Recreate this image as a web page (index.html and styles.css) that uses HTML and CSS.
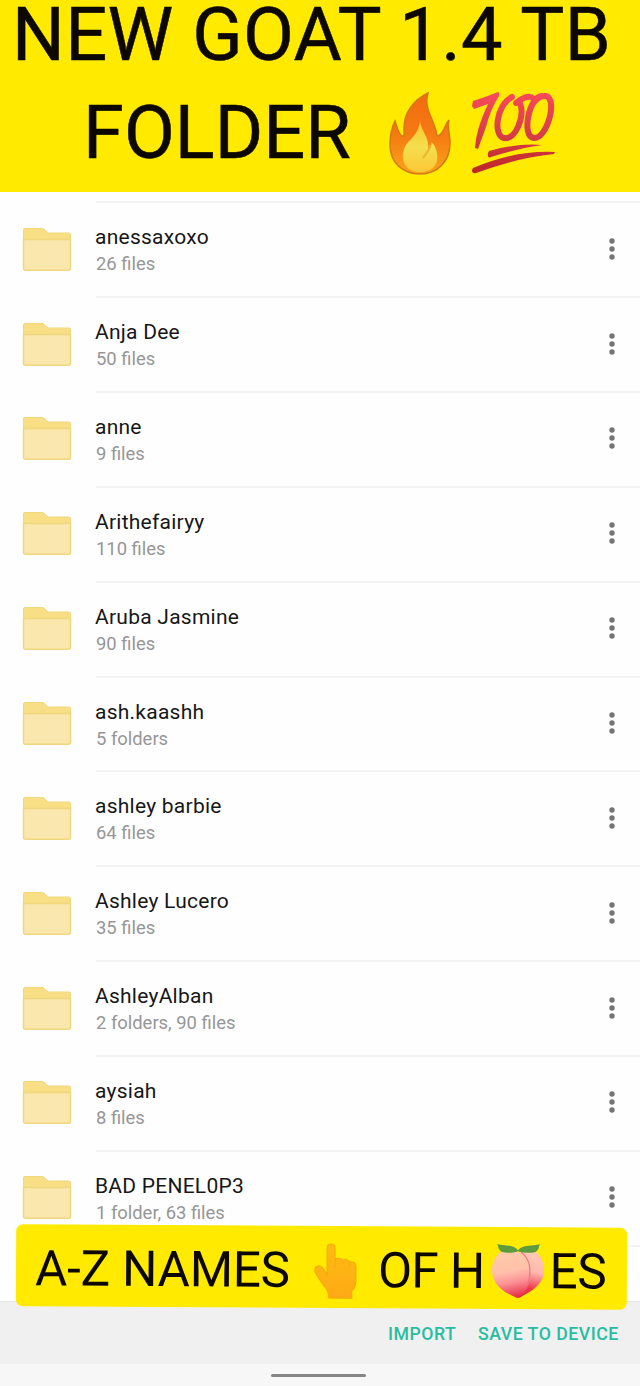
FILE: index.html
```html
<!DOCTYPE html>
<html lang="en">
<head>
<meta charset="utf-8">
<title>Folders</title>
<link rel="stylesheet" href="styles.css">
</head>
<body>
<svg class="defs" width="0" height="0" aria-hidden="true">
  <defs>
    <symbol id="folder" viewBox="0 0 50 45">
      <path d="M1.500 3Q1.500 1.500 3 1.500H20Q22 1.500 23.500 3.500L26 6H47Q48.500 6 48.500 7.500V14H1.500Z" fill="#f8df86" stroke="#f1d87c" stroke-width="1"/>
      <path d="M1.500 12.500H48.500V41Q48.500 43.300 46.500 43.300H3.500Q1.500 43.300 1.500 41Z" fill="#fae7ae" stroke="#f0d67c" stroke-width="1.400"/>
    </symbol>
    <symbol id="more" viewBox="0 0 8 24">
      <circle cx="4" cy="4" r="2.700"/><circle cx="4" cy="12" r="2.700"/><circle cx="4" cy="20" r="2.700"/>
    </symbol>
  </defs>
</svg>
<div class="screen">
  <header class="banner">
    <div class="banner-line first">NEW GOAT 1.4 TB</div>
    <div class="banner-line second">
      <span class="banner-word">FOLDER</span>
      <svg class="fire" viewBox="0 0 62 84">
        <defs>
          <linearGradient id="flame" x1="0" y1="0" x2="0" y2="1"><stop offset="0" stop-color="#f36a10"/><stop offset=".5" stop-color="#f57912"/><stop offset="1" stop-color="#fba41c"/></linearGradient>
          <linearGradient id="core" x1="0" y1="0" x2="0" y2="1"><stop offset="0" stop-color="#f5c62c"/><stop offset=".5" stop-color="#f5de4e"/><stop offset="1" stop-color="#fbc836"/></linearGradient>
        </defs>
        <path d="M39 1C25 8 15 20 15 36C15 41 16 45 13 44C9 41 8 35 6 29C2 37 1 44 1 53C1 71 14 82 31 82C49 82 61 69 61 51C61 42 58 36 60 28C55 34 54 44 48 44C46 27 34 18 39 1Z" fill="url(#flame)" stroke="#d17b12" stroke-width="1.500"/>
        <path d="M31 29C29 45 19 47 15 57C11 70 18 80 31 80C43 80 50 73 48 61C47 55 44 51 42 50C43 55 41 58 39 57C41 46 32 39 31 29Z" fill="url(#core)"/>
        <path d="M41 53C41 59 36 62 34 66" fill="none" stroke="#e7b72d" stroke-width="2"/>
      </svg>
      <svg class="hundred" viewBox="0 0 84 84">
        <defs><linearGradient id="red" gradientUnits="userSpaceOnUse" x1="0" y1="0" x2="0" y2="84"><stop offset="0" stop-color="#fa4b5b"/><stop offset=".6" stop-color="#d23b43"/><stop offset="1" stop-color="#bd2427"/></linearGradient></defs>
        <g fill="url(#red)">
          <path d="M1 15L2 10Q15 6 27 1Q29 2 28 5Q20 17 15 36L7 58L4 57Q5 38 17 13L3 18Z"/>
          <path d="M18 60Q46 52 71 54Q49 57 20 66Q16 68 17 62Z"/>
          <path d="M2 77Q44 59 84 61L83 63Q45 67 5 82Q1 83 1 79Z"/>
        </g>
        <g fill="none" stroke="url(#red)" stroke-width="6" stroke-linecap="round">
          <path d="M41 6C25 14 22 45 33 47C45 49 54 25 49 12C48 9 47 10 45 12"/>
          <path d="M49 9C55 5 60 5 63 8"/>
          <path d="M71 5C58 5 50 46 63 47C76 48 87 8 75 5Q67 4 61 14"/>
        </g>
      </svg>
    </div>
  </header>
  <main class="list">
    <div class="row"><svg class="folder"><use href="#folder"/></svg><div class="body"><div class="name">anessaxoxo</div><div class="meta">26 files</div></div><svg class="more"><use href="#more"/></svg></div>
    <div class="row"><svg class="folder"><use href="#folder"/></svg><div class="body"><div class="name">Anja Dee</div><div class="meta">50 files</div></div><svg class="more"><use href="#more"/></svg></div>
    <div class="row"><svg class="folder"><use href="#folder"/></svg><div class="body"><div class="name">anne</div><div class="meta">9 files</div></div><svg class="more"><use href="#more"/></svg></div>
    <div class="row"><svg class="folder"><use href="#folder"/></svg><div class="body"><div class="name">Arithefairyy</div><div class="meta">110 files</div></div><svg class="more"><use href="#more"/></svg></div>
    <div class="row"><svg class="folder"><use href="#folder"/></svg><div class="body"><div class="name">Aruba Jasmine</div><div class="meta">90 files</div></div><svg class="more"><use href="#more"/></svg></div>
    <div class="row"><svg class="folder"><use href="#folder"/></svg><div class="body"><div class="name">ash.kaashh</div><div class="meta">5 folders</div></div><svg class="more"><use href="#more"/></svg></div>
    <div class="row"><svg class="folder"><use href="#folder"/></svg><div class="body"><div class="name">ashley barbie</div><div class="meta">64 files</div></div><svg class="more"><use href="#more"/></svg></div>
    <div class="row"><svg class="folder"><use href="#folder"/></svg><div class="body"><div class="name">Ashley Lucero</div><div class="meta">35 files</div></div><svg class="more"><use href="#more"/></svg></div>
    <div class="row"><svg class="folder"><use href="#folder"/></svg><div class="body"><div class="name">AshleyAlban</div><div class="meta">2 folders, 90 files</div></div><svg class="more"><use href="#more"/></svg></div>
    <div class="row"><svg class="folder"><use href="#folder"/></svg><div class="body"><div class="name">aysiah</div><div class="meta">8 files</div></div><svg class="more"><use href="#more"/></svg></div>
    <div class="row"><svg class="folder"><use href="#folder"/></svg><div class="body"><div class="name">BAD PENEL0P3</div><div class="meta">1 folder, 63 files</div></div><svg class="more"><use href="#more"/></svg></div>
    <div class="row"></div>
  </main>
  <footer class="actions"><span class="import">IMPORT</span><span class="save">SAVE TO DEVICE</span></footer>
  <div class="nav"><div class="handle"></div></div>
  <div class="sticker">
    <span class="az">A-Z NAMES</span>
    <svg class="hand" viewBox="0 0 44 56">
      <defs><linearGradient id="skin" x1="0" y1="0" x2="0" y2="1"><stop offset="0" stop-color="#fcbd12"/><stop offset="1" stop-color="#ffa915"/></linearGradient></defs>
      <path d="M13 30V6Q13 1 17 1Q21 1 21 6V16Q25 14 29 17Q33 15 36 19Q42 18 42 24V37Q42 44 38 48V55H15Q15 48 10 43Q5 36 1 29Q0 24 4 23Q8 22 12 30Z" fill="url(#skin)" stroke="#f6a80b"/>
      <path d="M21 16V25M29 18V21M36 20V23M13 29V34" fill="none" stroke="#f6a80c" stroke-width="1"/>
    </svg>
    <span class="of">OF H</span>
    <svg class="peach" viewBox="0 0 54 56">
      <defs>
        <linearGradient id="peachL" x1=".4" y1="0" x2=".55" y2="1"><stop offset="0" stop-color="#ffcdaa"/><stop offset=".45" stop-color="#ffc0aa"/><stop offset=".68" stop-color="#fb9297"/><stop offset="1" stop-color="#e62b45"/></linearGradient>
        <linearGradient id="peachR" x1=".5" y1="0" x2=".4" y2="1"><stop offset="0" stop-color="#ffcdb2"/><stop offset=".45" stop-color="#ffb8b0"/><stop offset=".8" stop-color="#ed3a50"/><stop offset="1" stop-color="#e62b45"/></linearGradient>
      </defs>
      <path d="M28 9C38 1 53 9 53 27C53 42 39 49 28 55Z" fill="url(#peachR)"/>
      <path d="M27 9C16 1 1 10 1 27C1 42 14 50 27 55C36 48 39 42 39 30C39 20 34 12 27 9Z" fill="url(#peachL)"/>
      <path d="M30 9C39 15 41 28 37 40" fill="none" stroke="#e97c78" stroke-width="1.200"/>
      <path d="M27 8C22 10 15 10 11 9C6 6 8 3 6 1C12 3 22 1 27 7C32 1 41 3 49 1C47 3 49 6 44 9C39 10 32 10 27 8Z" fill="#5d9b3d"/>
    </svg>
    <span class="es">ES</span>
  </div>
</div>
</body>
</html>
```
FILE: styles.css
```css
* { box-sizing: border-box; }
body { margin: 0; background: #fff; font-family: Roboto, "Liberation Sans", sans-serif; }
.defs { display: block; height: 0; }
.screen { position: relative; width: 640px; height: 1386px; overflow: hidden; display: flex; flex-direction: column; background: #fefefe; }
.banner { height: 192px; flex: none; background: #ffea00; color: #0c0800; }
.banner-line { font-size: 74px; white-space: nowrap; -webkit-text-stroke: .5px #0c0800; }
.first { height: 84px; line-height: 70px; padding-left: 12px; letter-spacing: .35px; }
.second { display: flex; height: 98px; line-height: 98px; padding-left: 83px; }
.banner-word { width: 306px; }
.fire { width: 62px; height: 84px; margin-top: 8px; }
.hundred { width: 84px; height: 84px; margin: 7px 0 0 20px; }
.list { height: 1109px; padding-top: 9.3px; overflow: hidden; flex: none; }
.row { display: flex; height: 94.85px; }
.folder { width: 50px; height: 45px; margin: 25.500px 0 0 22px; flex: none; }
.body { flex: 1; margin-left: 23.500px; padding-top: 21px; border-top: 2px solid #f3f2f4; }
.row:last-child { margin-left: 96px; border-top: 2px solid #f3f2f4; }
.name { height: 27px; line-height: 27px; font-size: 21px; letter-spacing: .25px; margin-left: -.5px; color: #171717; }
.meta { height: 26px; line-height: 26px; font-size: 18.400px; color: #969696; padding-left: .5px; }
.more { position: absolute; right: 24px; width: 8px; height: 24px; margin-top: 35.500px; fill: #757575; }
.actions { height: 63px; flex: none; background: #f0f0f1; border-top: 1px solid #e6e6e7; display: flex; padding: 21px 0 0 388px; font-size: 17.700px; letter-spacing: .5px; line-height: 22px; font-weight: 500; color: #28bda0; white-space: nowrap; }
.import { width: 90px; }
.nav { flex: 1; background: #f7f7f7; padding-top: 10px; }
.handle { width: 95px; height: 3px; margin-left: 271px; border-radius: 2px; background: #858585; }
.sticker { position: absolute; left: 16px; top: 1226px; width: 611px; height: 82px; padding-left: 19px; display: flex; border-radius: 7px; background: #ffea00; transform: rotate(.33deg); font-size: 49.500px; letter-spacing: -.2px; line-height: 88px; color: #0c0800; white-space: nowrap; }
.az { width: 279px; }
.hand { width: 44px; height: 56px; margin-top: 17px; flex: none; }
.of { width: 113px; margin-left: 20px; letter-spacing: -.6px; }
.peach { width: 54px; height: 56px; margin-top: 16px; flex: none; }
.es { margin-left: 4.500px; }
```
